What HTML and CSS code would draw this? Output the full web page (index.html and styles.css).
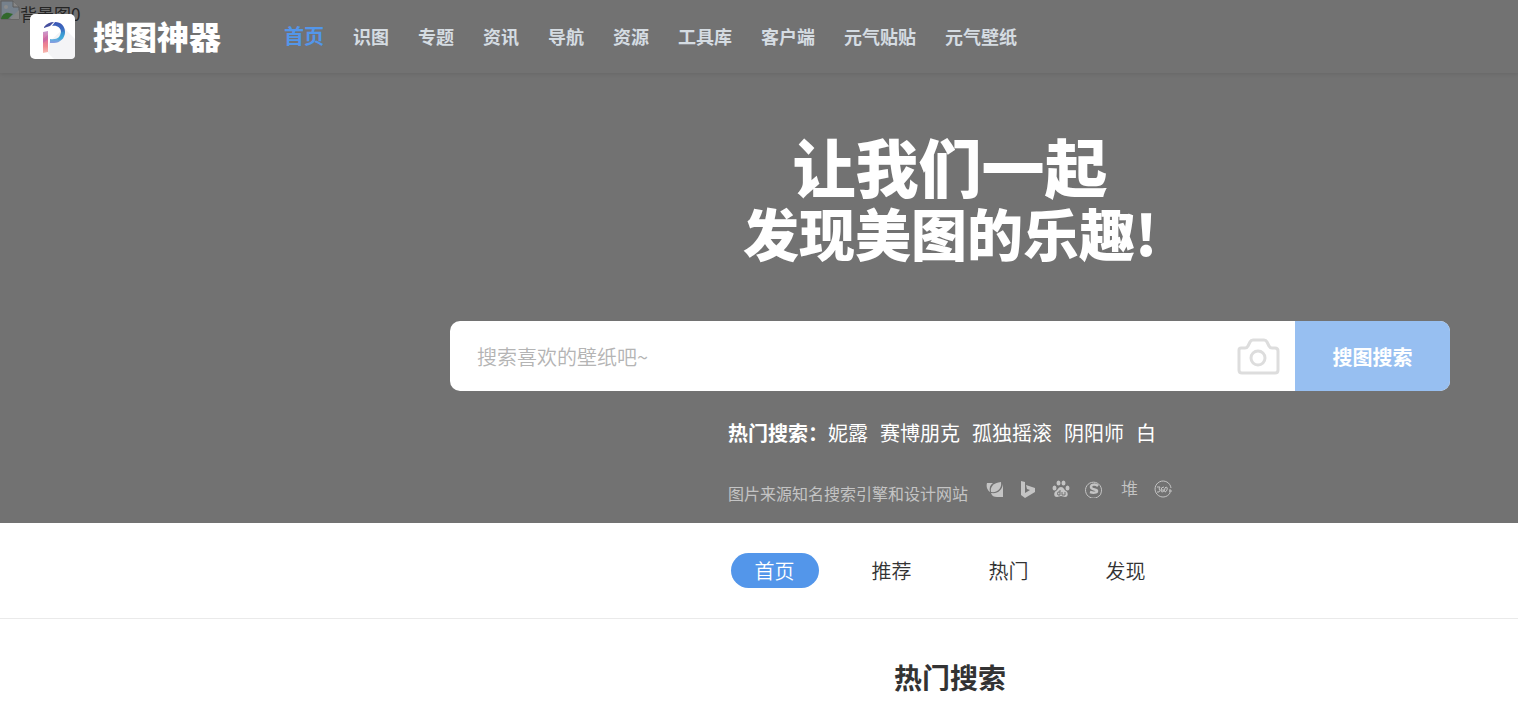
FILE: index.html
```html
<!DOCTYPE html>
<html lang="zh-CN">
  <head>
    <meta charset="UTF-8" />
    <meta name="viewport" content="width=device-width, initial-scale=1.0" />
    <title>搜图神器</title>
    <link rel="stylesheet" href="styles.css">
  </head>
  <body>
    <div class="banner">
      <!-- Background slide -->
      <div class="banner-bg">
        <svg width="20" height="20" viewBox="0 0 20 20" aria-hidden="true">
          <path d="M1 1h12l6 6v12H1z" fill="#76818c" stroke="#5c5c5c" />
          <path d="M13 1v6h6" fill="#868686" stroke="#5c5c5c" />
          <circle cx="6" cy="7" r="2" fill="#8c8c8c" />
          <path d="M1 19c1-5 5-7 8-6l4 1-5 5z" fill="#31682c" />
          <path d="M10 19l9-9v9z" fill="#858585" />
        </svg>
        <span>背景图0</span>
      </div>

      <header class="header">
        <a class="logo" href="#">
          <svg class="logo-icon" viewBox="0 0 45 45" aria-hidden="true">
            <defs>
              <linearGradient id="bowl" x1="0" y1="0" x2="0" y2="1">
                <stop offset="0" stop-color="#3d55b5" />
                <stop offset="0.45" stop-color="#3a76c4" />
                <stop offset="0.75" stop-color="#49b5dc" />
                <stop offset="1" stop-color="#8b9be0" />
              </linearGradient>
              <linearGradient id="stem" x1="0" y1="0" x2="0" y2="1">
                <stop offset="0" stop-color="#c79bd0" />
                <stop offset="0.4" stop-color="#e0709c" />
                <stop offset="0.7" stop-color="#f08a90" />
                <stop offset="1" stop-color="#f7bdb4" />
              </linearGradient>
            </defs>
            <rect width="45" height="45" rx="5" fill="#fff" />
            <path d="M34 14l11 11v16q0 4-4 4H24l-6-6 1-11z" fill="#f4f4f6" />
            <path d="M22 12l3-4c6 0 10 4 10 10s-5 11-11 11h-4v-4c7 1 11-2 11-7 0-4-4-7-9-6z" fill="url(#bowl)" />
            <path d="M14 13q4-5 10-5l-4 4-6 2z" fill="#454f9e" />
            <path d="M13 18l5-1v21l-5 1z" fill="url(#stem)" />
            <path d="M13 25l5-4v4l-5 4z" fill="#b565ab" opacity="0.5" />
            <path d="M31 18l4-1-2 8-5 1z" fill="#35a0d5" opacity="0.5" />
          </svg>
          <span class="logo-text">搜图神器</span>
        </a>
        <nav class="nav">
          <a class="active" href="#">首页</a>
          <a href="#">识图</a>
          <a href="#">专题</a>
          <a href="#">资讯</a>
          <a href="#">导航</a>
          <a href="#">资源</a>
          <a href="#">工具库</a>
          <a href="#">客户端</a>
          <a href="#">元气贴贴</a>
          <a href="#">元气壁纸</a>
        </nav>
      </header>

      <div class="banner-content">
        <h1 class="slogan">
          <span class="slogan-top">让我们一起</span>
          <span class="slogan-bottom">发现美图的乐趣!</span>
        </h1>

        <!-- Search box -->
        <form class="search">
          <input type="text" class="search-input" placeholder="搜索喜欢的壁纸吧~" aria-label="搜索" />
          <button type="button" class="camera-btn" aria-label="识图">
            <svg width="44" height="38" viewBox="0 0 44 38" aria-hidden="true">
              <path d="M5 11h4q2 0 3-2l2-4q1-2 3-2h11q2 0 3 2l2 4q1 2 3 2h3q3 0 3 3v19q0 3-3 3H6q-3 0-3-3V13q0-2 2-2z" fill="none" stroke="#ddd" stroke-width="3" />
              <circle cx="22" cy="21" r="7" fill="none" stroke="#ddd" stroke-width="3" />
            </svg>
          </button>
          <button type="submit" class="search-btn">搜图搜索</button>
        </form>

        <div class="banner-info">
          <div class="hot-words">
            <strong>热门搜索：</strong>
            <a href="#">妮露</a>
            <a href="#">赛博朋克</a>
            <a href="#">孤独摇滚</a>
            <a href="#">阴阳师</a>
            <a href="#">白</a>
          </div>
          <div class="source">
            <p>图片来源知名搜索引擎和设计网站</p>
            <div class="source-icons">
              <svg viewBox="0 0 18 18" aria-hidden="true">
                <path d="M1 3h6C4 5 3 8 4 12 1 10 0 6 1 3z" />
                <path d="M5 12C4 7 7 3 15 2c1 6-3 11-10 10z" />
                <path d="M17 4v13h-6c-3 0-5-1-6-4 7 1 11-3 12-9z" />
              </svg>
              <svg viewBox="0 0 18 18" aria-hidden="true">
                <path d="M2 1l4 1v11l5-3-3-1-1-4 9 3v4l-10 6-4-3z" />
              </svg>
              <svg viewBox="0 0 18 18" aria-hidden="true">
                <ellipse cx="2.500" cy="8" rx="2" ry="2.500" />
                <ellipse cx="6.500" cy="3" rx="2" ry="2.600" />
                <ellipse cx="11.500" cy="3" rx="2" ry="2.600" />
                <ellipse cx="15.500" cy="8" rx="2" ry="2.500" />
                <path d="M9 7c3 0 3 3 5 4s3 6-1 6l-4-1-4 1c-4 0-3-5-1-6s2-4 5-4z" />
                <path d="M8 10v5H6q-1-1 0-3h2M10 12v3h3v-3" fill="none" stroke="#727272" />
              </svg>
              <svg viewBox="0 0 18 18" aria-hidden="true">
                <path d="M14 16a8 8 0 1 1 2-3q0 2-2 3" fill="none" stroke="#c4c4c4" />
                <path d="M13 6C11 4 6 4 6 7s6 2 6 4-4 2-7 1" fill="none" stroke="#c4c4c4" stroke-width="2.500" />
              </svg>
              <span class="duitang">堆</span>
              <svg viewBox="0 0 18 18" aria-hidden="true">
                <path d="M16 13a8 8 0 1 1 1-5" fill="none" stroke="#c4c4c4" />
                <path d="M15 11h3M16 9v4" stroke="#c4c4c4" />
                <path d="M3 7h3L5 9q2 1 0 3H3M10 7Q7 7 7 10q0 2 1 2 2 0 2-2H7M12 7q2 0 1 3-1 2-2 2-1-1 0-4z" fill="none" stroke="#c4c4c4" />
              </svg>
            </div>
          </div>
        </div>
      </div>
    </div>

    <nav class="tabs">
      <a class="active" href="#">首页</a>
      <a href="#">推荐</a>
      <a href="#">热门</a>
      <a href="#">发现</a>
    </nav>

    <h2 class="section-title">热门搜索</h2>
  </body>
</html>
```

FILE: styles.css
```css
* {
  box-sizing: border-box;
}

body {
  margin: 0;
  font-family: "Noto Sans CJK SC", sans-serif;
  color: #333;
  background: #fff;
}

a {
  color: inherit;
  text-decoration: none;
}

/* Banner */
.banner {
  position: relative;
  padding-bottom: 17px;
  background: #727272;
}

.banner-bg {
  position: absolute;
  top: 0;
  left: 0;
  display: flex;
  font-size: 17px;
  line-height: 28px;
  color: #252525;
}

.header {
  position: relative;
  display: flex;
  align-items: center;
  height: 73px;
  padding: 0 30px;
  box-shadow: 0 1px 4px rgba(0, 0, 0, 0.1);
}

.logo {
  display: flex;
  align-items: center;
  gap: 18px;
  color: #fff;
}

.logo-icon {
  width: 45px;
  height: 45px;
}

.logo-text {
  padding-bottom: 4px;
  font-size: 32px;
  font-weight: 900;
  line-height: 40px;
}

.nav {
  display: flex;
  align-items: center;
  gap: 29px;
  margin-left: 63px;
  padding-bottom: 2px;
  font-size: 18px;
  font-weight: bold;
  color: #d5dce2;
}

.nav .active {
  font-size: 20px;
  color: #5396ea;
}

/* Everything under the header is centred right of the side gutter */
.banner-content,
.tabs,
.section-title {
  padding-left: 382px;
}

.slogan {
  display: flex;
  flex-direction: column;
  align-items: center;
  margin: 58px 0 56px;
  font-weight: 900;
  line-height: 67px;
  color: #fff;
}

.slogan-top {
  font-size: 63px;
}

.slogan-bottom {
  font-size: 56px;
}

/* Search box */
.search {
  display: flex;
  max-width: 1000px;
  height: 70px;
  margin: 0 auto;
  border-radius: 10px;
  background: #fff;
  overflow: hidden;
}

.search-input {
  flex: 1;
  padding: 0 27px;
  border: none;
  outline: none;
  background: none;
  font-family: inherit;
  font-size: 20px;
  color: #333;
}

.search-input::placeholder {
  font-weight: 350;
  color: #b4b4b4;
}

.camera-btn {
  display: flex;
  align-items: center;
  padding: 0 15px;
  border: none;
  background: none;
  cursor: pointer;
}

.search-btn {
  width: 155px;
  border: none;
  background: #97bff1;
  font-family: inherit;
  font-size: 20px;
  font-weight: bold;
  color: #fff;
  cursor: pointer;
}

.banner-info {
  width: 444px;
  margin: 27px auto 0;
}

.hot-words {
  display: flex;
  gap: 12px;
  font-size: 20px;
  line-height: 30px;
  color: #fff;
}

.hot-words strong {
  margin-right: -12px;
}

.source {
  display: flex;
  justify-content: space-between;
  margin-top: 32px;
  color: #c4c4c4;
}

.source p {
  margin: 0;
  font-size: 16px;
  line-height: 26px;
}

.source-icons {
  display: flex;
  gap: 15px;
}

.source-icons svg {
  width: 18px;
  height: 18px;
  fill: #c4c4c4;
}

.duitang {
  padding: 0 1px 0 3px;
  font-size: 17px;
  font-weight: 350;
  line-height: 16px;
}

/* Tabs */
.tabs {
  display: flex;
  justify-content: center;
  gap: 29px;
  padding-top: 30px;
  padding-bottom: 30px;
  border-bottom: 1px solid #eaeaea;
}

.tabs a {
  width: 88px;
  border-radius: 18px;
  font-size: 20px;
  font-weight: 350;
  line-height: 35px;
  text-align: center;
}

.tabs .active {
  background: #5396ea;
  color: #fff;
}

.section-title {
  margin: 39px 0;
  font-size: 28px;
  line-height: 38px;
  text-align: center;
}
```
